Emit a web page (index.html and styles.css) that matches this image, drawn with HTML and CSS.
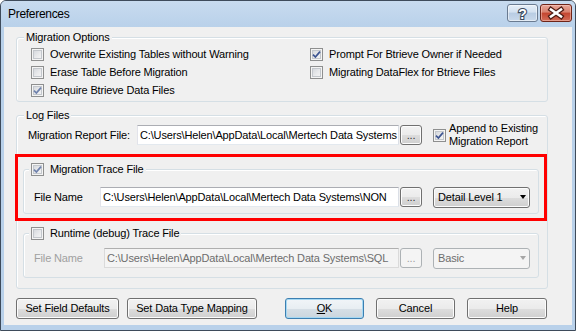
FILE: index.html
```html
<!DOCTYPE html>
<html lang="en">
<head>
    <meta charset="UTF-8">
    <title>Preferences</title>
    <link rel="stylesheet" href="styles.css">
</head>
<body>
    <div class="window">
        <div class="titlebar">
            <span class="title">Preferences</span>
            <div class="caption-buttons">
                <span class="cap-btn cap-help">
                    <svg width="29" height="16" viewBox="0 0 29 16"><text x="14.5" y="13.5" text-anchor="middle" font-family="Liberation Sans, sans-serif" font-weight="bold" font-size="14" fill="#fff" stroke="#3b4a5e" stroke-width="2.2" paint-order="stroke">?</text></svg>
                </span>
                <span class="cap-btn cap-close">
                    <svg width="30" height="16" viewBox="0 0 30 16"><path d="M10 4.5 L20 11.5 M20 4.5 L10 11.5" fill="none" stroke="#4d1a12" stroke-width="5" stroke-linecap="square"/><path d="M10 4.5 L20 11.5 M20 4.5 L10 11.5" fill="none" stroke="#fff" stroke-width="2.6" stroke-linecap="square"/></svg>
                </span>
            </div>
        </div>

        <div class="client">
            <fieldset class="group options">
                <legend>Migration Options</legend>
                <div class="option-grid">
                    <label class="check"><span class="cb"></span>Overwrite Existing Tables without Warning</label>
                    <label class="check"><span class="cb"><svg class="tick" width="9" height="9" viewBox="0 0 9 9"><path d="M1 4.6 L3.4 7 L8 1.6"/></svg></span>Prompt For Btrieve Owner if Needed</label>
                    <label class="check"><span class="cb"></span>Erase Table Before Migration</label>
                    <label class="check"><span class="cb"></span>Migrating DataFlex for Btrieve Files</label>
                    <label class="check"><span class="cb"><svg class="tick faded" width="9" height="9" viewBox="0 0 9 9"><path d="M1 4.6 L3.4 7 L8 1.6"/></svg></span>Require Btrieve Data Files</label>
                </div>
            </fieldset>

            <fieldset class="group logs">
                <legend>Log Files</legend>
                <div class="report-row">
                    <span class="field-label report-label">Migration Report File:</span>
                    <div class="textbox report-path">C:\Users\Helen\AppData\Local\Mertech Data Systems</div>
                    <button class="browse">...</button>
                    <label class="check append"><span class="cb"><svg class="tick" width="9" height="9" viewBox="0 0 9 9"><path d="M1 4.6 L3.4 7 L8 1.6"/></svg></span><span>Append to Existing<br>Migration Report</span></label>
                </div>

                <div class="highlight">
                    <fieldset class="group sub trace">
                        <legend><label class="check"><span class="cb"><svg class="tick faded" width="9" height="9" viewBox="0 0 9 9"><path d="M1 4.6 L3.4 7 L8 1.6"/></svg></span>Migration Trace File</label></legend>
                        <div class="file-row">
                            <span class="field-label">File Name</span>
                            <div class="textbox trace-path">C:\Users\Helen\AppData\Local\Mertech Data Systems\NON</div>
                            <button class="browse">...</button>
                            <div class="combo"><span>Detail Level 1</span><span class="arrow"></span></div>
                        </div>
                    </fieldset>
                </div>

                <fieldset class="group sub runtime">
                    <legend><label class="check"><span class="cb"></span>Runtime (debug) Trace File</label></legend>
                    <div class="file-row">
                        <span class="field-label">File Name</span>
                        <div class="textbox runtime-path">C:\Users\Helen\AppData\Local\Mertech Data Systems\SQL</div>
                        <button class="browse" disabled>...</button>
                        <div class="combo"><span>Basic</span><span class="arrow"></span></div>
                    </div>
                </fieldset>
            </fieldset>

            <div class="button-row">
                <button class="btn btn-defaults">Set Field Defaults</button>
                <button class="btn btn-mapping">Set Data Type Mapping</button>
                <button class="btn btn-ok"><u>O</u>K</button>
                <button class="btn btn-cancel">Cancel</button>
                <button class="btn btn-help">Help</button>
            </div>
        </div>
    </div>
</body>
</html>
```

FILE: styles.css
```css
body {
    margin: 0;
    font-family: 'Liberation Sans', Arial, sans-serif;
    font-size: 11px;
    letter-spacing: -0.15px;
    color: #000;
    background-color: #fff;
}

.window {
    width: 576px;
    height: 331px;
    box-sizing: border-box;
    border: 1px solid #3e4b5b;
    border-radius: 6px 6px 0 0;
    background-color: #b9d1ea;
    padding: 0 3px 5px;
    display: flex;
    flex-direction: column;
}

.titlebar {
    height: 26px;
    margin: 0 -3px;
    padding: 0 3px 0 7px;
    display: flex;
    align-items: flex-start;
    border-radius: 5px 5px 0 0;
    background: linear-gradient(#c8dbef, #b9d1ea);
}

.title {
    font-size: 12px;
    letter-spacing: -0.3px;
    line-height: 14px;
    padding-top: 6px;
}

.caption-buttons {
    margin-left: auto;
    margin-top: 3px;
    display: flex;
    gap: 2px;
}

.cap-btn {
    height: 18px;
    box-sizing: border-box;
    border-radius: 3px;
    display: flex;
    align-items: center;
    justify-content: center;
}

.cap-help {
    width: 31px;
    border: 1px solid #6a7b91;
    background: linear-gradient(#e6eef8 0%, #d3e1f0 45%, #b8cce3 50%, #c9d9eb 100%);
    box-shadow: inset 0 0 0 1px rgba(255, 255, 255, 0.5);
}

.cap-close {
    width: 32px;
    border: 1px solid #6e2418;
    background: linear-gradient(#e8a698 0%, #d8806d 45%, #c4452f 50%, #d36d58 100%);
    box-shadow: inset 0 0 0 1px rgba(255, 220, 210, 0.45);
}

.client {
    flex: 1;
    background-color: #f0f0f0;
    padding: 3px 0 0 12px;
}

/* group boxes */
.group {
    margin: 0;
    padding: 0;
    min-width: 0;
    box-sizing: border-box;
    border: 1px solid #d5dfe5;
    border-radius: 3px;
    box-shadow: inset 1px 1px 0 #fff;
}

.group legend {
    margin-left: 7px;
    padding: 0 2px;
    line-height: 15px;
    background-color: #f0f0f0;
}

.options {
    width: 532px;
    padding-bottom: 2px;
}

.option-grid {
    display: grid;
    grid-template-columns: 279px auto;
    grid-auto-rows: 18px;
    padding-left: 14px;
}

.check {
    display: flex;
    align-items: center;
    white-space: nowrap;
}

.cb {
    width: 13px;
    height: 13px;
    flex: none;
    box-sizing: border-box;
    margin-right: 6px;
    border: 1px solid #8e8f8f;
    background: linear-gradient(135deg, #cdd1d7 0%, #e9eaec 55%, #f8f8f8 100%);
    box-shadow: inset 0 0 0 1px #f4f4f4, inset 0 0 0 2px #c3c7cc;
    display: flex;
    align-items: center;
    justify-content: center;
}

.tick path {
    fill: none;
    stroke: #3d5592;
    stroke-width: 1.7;
}

.tick.faded path {
    stroke: #6f82ad;
}

.logs {
    width: 532px;
    margin-top: 6px;
}

.report-row {
    display: flex;
    align-items: center;
    height: 26px;
    margin-top: -1px;
    padding-left: 11px;
}

.report-label {
    width: 109px;
}

.textbox {
    height: 20px;
    box-sizing: border-box;
    border: 1px solid;
    border-color: #abadb3 #dbdfe6 #e3e9ef #e2e3ea;
    background-color: #fff;
    padding-left: 2px;
    line-height: 18px;
    white-space: nowrap;
    overflow: hidden;
}

.report-path {
    width: 262px;
}

.browse,
.btn,
.combo {
    font-family: inherit;
    font-size: 11px;
    letter-spacing: inherit;
    color: #000;
    box-sizing: border-box;
    border: 1px solid #707070;
    border-radius: 3px;
    background: linear-gradient(#f2f2f2 0%, #ebebeb 50%, #dddddd 51%, #cfcfcf 100%);
    box-shadow: inset 0 0 0 1px #fcfcfc;
    padding: 0;
}

.browse {
    width: 22px;
    height: 20px;
    margin-left: 1px;
    line-height: 18px;
    color: #333;
}

.browse:disabled {
    border-color: #adb2b5;
    background: #f4f4f4;
    box-shadow: none;
    color: #a0a0a0;
}

.append {
    margin-left: 11px;
    line-height: 13px;
}

.append .cb {
    margin-right: 3px;
}

/* red annotation round the trace file group */
.highlight {
    width: 532px;
    box-sizing: border-box;
    margin: 6px 0 0 -2px;
    border: 3px solid #ff0000;
    padding: 5px 0 4px 5px;
}

.sub {
    width: 516px;
}

.sub legend {
    margin-left: 5px;
}

.trace {
    padding-bottom: 6px;
}

.file-row {
    display: flex;
    align-items: center;
    height: 20px;
    margin-top: 10px;
    padding-left: 10px;
}

.field-label {
    flex: none;
}

.trace .field-label {
    width: 66px;
}

.trace-path {
    width: 299px;
}

.combo {
    width: 97px;
    height: 21px;
    margin-left: 11px;
    padding: 0 3px 0 4px;
    display: flex;
    align-items: center;
}

.arrow {
    margin-left: auto;
    width: 0;
    height: 0;
    border-top: 4px solid #000;
    border-left: 3.5px solid transparent;
    border-right: 3.5px solid transparent;
}

.runtime {
    margin: 5px 0 10px 6px;
    padding-bottom: 9px;
}

.runtime .file-row {
    margin-top: 7px;
}

.runtime .field-label {
    width: 70px;
    color: #a0a0a0;
}

.runtime-path {
    width: 295px;
    border-color: #afafaf #dadada #dadada #dadada;
    background-color: #f4f4f4;
    color: #6d6d6d;
}

.runtime .combo {
    border-color: #adb2b5;
    background: #f4f4f4;
    box-shadow: none;
    color: #6d6d6d;
}

.runtime .arrow {
    border-top-color: #a6a6a6;
}

/* dialog buttons */
.button-row {
    display: flex;
    margin-top: 9px;
}

.btn {
    height: 21px;
    line-height: 19px;
}

.btn-defaults {
    width: 103px;
}

.btn-mapping {
    width: 130px;
    margin-left: 8px;
}

.btn-ok {
    width: 79px;
    margin-left: 28px;
    border-color: #3c7fb1;
    background: linear-gradient(#f1f5f8 0%, #e8eef2 50%, #d6dfe6 51%, #cbd6de 100%);
    box-shadow: inset 0 0 0 1px #a5d8f3;
}

.btn-cancel {
    width: 79px;
    margin-left: 12px;
}

.btn-help {
    width: 80px;
    margin-left: 12px;
}
```
